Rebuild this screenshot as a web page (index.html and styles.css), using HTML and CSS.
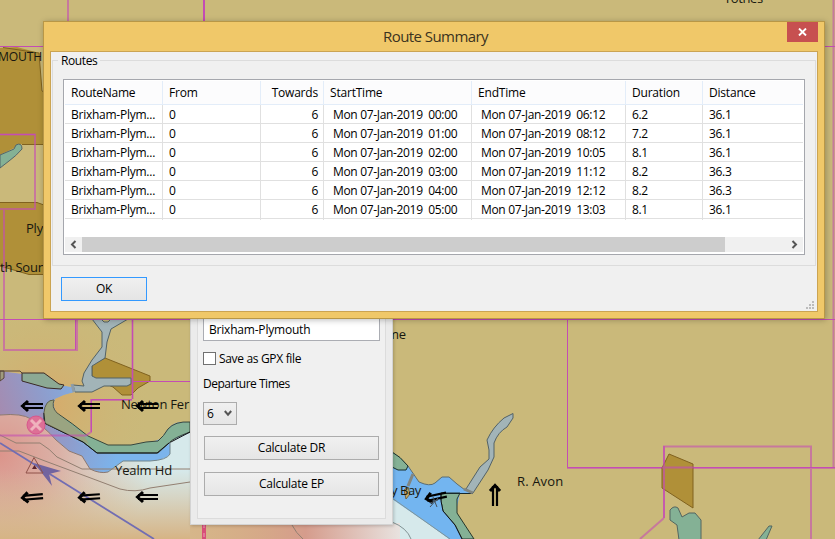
FILE: index.html
```html
<!DOCTYPE html>
<html lang="en">
<head>
<meta charset="utf-8">
<title>Route Summary</title>
<link rel="stylesheet" href="styles.css">
</head>
<body>
<div class="desktop">
<svg class="chart" width="835" height="539" viewBox="0 0 835 539">
  <defs>
    <radialGradient id="glow" gradientUnits="userSpaceOnUse" cx="0" cy="455" r="150">
      <stop offset="0" stop-color="#dc9086" stop-opacity=".95"/><stop offset=".4" stop-color="#dc9f90" stop-opacity=".75"/><stop offset="1" stop-color="#e0b48c" stop-opacity="0"/>
    </radialGradient>
    <linearGradient id="sand" x1="0" x2="0" y1="0" y2="1"><stop offset="0" stop-color="#d7b78b" stop-opacity="0"/><stop offset="1" stop-color="#d6b485"/></linearGradient>
    <linearGradient id="red" x1="0" x2="1" y1="0" y2="0"><stop offset="0" stop-color="#d5a880" stop-opacity="0"/><stop offset=".55" stop-color="#d59c8c"/><stop offset="1" stop-color="#e8e2df"/></linearGradient>
    <linearGradient id="shoal" gradientUnits="userSpaceOnUse" x1="0" y1="415" x2="85" y2="385"><stop offset="0" stop-color="#a58bb0"/><stop offset=".5" stop-color="#8f9ccb"/><stop offset="1" stop-color="#7fb1e6"/></linearGradient>
    <linearGradient id="channel" gradientUnits="userSpaceOnUse" x1="20" y1="420" x2="120" y2="450"><stop offset="0" stop-color="#a58bb0"/><stop offset=".5" stop-color="#8f9ccb"/><stop offset="1" stop-color="#7bb4ec"/></linearGradient>
    <radialGradient id="warm" gradientUnits="userSpaceOnUse" cx="45" cy="405" r="110"><stop offset="0" stop-color="#dda362" stop-opacity=".7"/><stop offset="1" stop-color="#cbb97b" stop-opacity="0"/></radialGradient>
    <g id="arrow" fill="none" stroke="#000"><path d="M6 2H26M6 -2H26" stroke-width="2.2"/><path d="M11 -5L5.500 0L11 5" stroke-width="3"/></g>
  </defs>
  <rect width="835" height="539" fill="#cab97a"/>
  <path d="M0 371L23 373L58 385L74 387L75 392H190V432L170 454L100 475L0 430Z" fill="url(#shoal)"/>
  <path d="M43 412V423L97 453H156L171 443V454Q169 461 150 461H123Q114 469 108 472Q96 474 88 468L69 452L30 420Z" fill="url(#channel)"/>
  <path id="land" d="M0 320H192V422H180Q170 423 163 436Q158 442 146 442L131 445H107L88 436Q70 422 57 413Q52 406 55 399Q65 394 75 392L74 387L58 385Q48 374 23 374L0 371Z" fill="#cab97a"/>
  <path d="M0 320H192V422H180Q170 423 163 436Q158 442 146 442L131 445H107L88 436Q70 422 57 413Q52 406 55 399Q65 394 75 392L74 387L58 385Q48 374 23 374L0 371Z" fill="url(#warm)"/>
  <path d="M0 415Q22 413 31 419Q44 426 56 440L69 451L82 456L90 469Q100 474 108 472L123 461H150Q165 460 170 454V441L192 432V539H0Z" fill="#d6e9eb"/>
  <path d="M0 415Q22 413 31 419Q44 426 56 440L69 451L82 456L90 469Q100 474 108 472L123 461H150Q165 460 170 454V441L192 432V539H0Z" fill="url(#glow)"/>
  <rect y="470" width="192" height="69" fill="url(#sand)"/>
  <rect x="190" y="523" width="203" height="16" fill="#d6b68a"/>
  <path d="M392 498L450 539H392Z" fill="#d6e9eb"/>
  <rect x="190" y="523" width="210" height="16" fill="url(#red)"/>
  <g stroke-width="1">
    <path d="M44 413Q45 400 54 400Q51 407 57 413Q72 423 88 436L108 445H131L146 442L158 441Q164 436 168 429Q175 421 190 422V432Q173 438 169 443L158 453H97L83 442L45 423Z" fill="#84b195" stroke="#39463b"/>
    <path d="M44 413V423L83 442L97 453H157L169 443L190 432" fill="none" stroke="#151515"/>
    <path d="M44 413Q45 400 54 400Q51 407 57 413L83 434L89 444L46 424Z" fill="#b0976d" opacity=".5"/>
    <path d="M22 373H44L59 384L64 385L61 389L47 388L22 381Z" fill="#8ca994" stroke="#3a2925"/>
    <path d="M0 371H4V378L0 381Z" fill="#a09b7e" stroke="#57453a"/>
    <path d="M0 371H20L22 373" fill="none" stroke="#57453a"/>
    <path d="M92 365L105 358L150 376V381L138 388L131 395H122L113 387L92 378Z" fill="#b09038" stroke="#80621f"/>
    <path d="M92 319L102 332V347L92 360L84 373L82 381L84 386L73 385L75 392H92L104 386H127L131 384V378H96L92 376V366L105 358L107 342L111 329L128 319H111L108 322L104 322L101 319Z" fill="#a2b4b8" stroke="#536266"/>
    <path d="M72 384L74 392" stroke="#8f9da6" stroke-width="3"/>
    <path d="M0 415Q22 413 31 419Q44 426 56 440L69 451L82 456L90 469Q100 474 108 472" fill="none" stroke="#8b7770"/>
    <path d="M108 472L123 461H150Q167 460 170 454V442" fill="none" stroke="#73858b"/>
    <g fill="none" stroke="#927f71"><path d="M0 435L16 443H40Q50 449 57 457L82 469H190"/><path d="M0 451H19L45 461L88 477L120 489Q135 493 150 488L190 482"/></g>
  </g>
  <path d="M0 48L17 47L39 53L42 91L44 92V144H22L0 155Z" fill="#b09038"/>
  <path d="M3 47.500L39 53L42 91L44 92M44 144.500H22" fill="none" stroke="#80621f"/>
  <path d="M0 155L14 149L16 145Q22 142 22 149Q16 156 9 161L0 168Z" fill="#84b195" stroke="#53666a"/>
  <path d="M0 202.500H37L44 205V274.500H29L0 266Z" fill="#b09038"/>
  <path d="M0 202.500H37L44 205M44 274.500H29L0 266" fill="none" stroke="#80621f"/>
  <g fill="none" stroke="#c44cb4">
    <path d="M68 0V22M0 134.500H35V209H0M4 209V350H77V319M132.500 319V399M0 435.500H86L91 432V400H132" stroke-width="2" opacity=".6"/>
    <path d="M204 0V22" stroke-width="2"/><path d="M0 46.500H44M824 46.500H835M0 319.500H835M132 381.500H190M567.500 319V467.500H835M132.500 319V399M0 134.500H35M91.500 432V399.500H132M75.500 319V350"/>
    <path d="M833.500 0V467M567 468H835M664 518V446.500H811V539M664 518L640 539" stroke-width="2" opacity=".6"/>
  </g>
  <path d="M204 524V539" stroke="#d84e79" stroke-width="4"/><path d="M204 524V539" stroke="#eca0b6" stroke-dasharray="4 5"/>
  <path d="M292 525Q296 533 303 539" fill="none" stroke="#927f71"/>
  <path d="M392 452L408 466L419 482Q430 487 435 483L442 477H449L457 484L465 490L473 493H460L450 539L392 499Z" fill="#73b5f0"/>
  <path d="M392 452L408 466L419 482Q430 487 435 483L442 477H449L457 484L465 490" fill="none" stroke="#5b6d72"/>
  <path d="M392 452Q400 456 408 466L406 470H398L392 467Z" fill="#84b195" stroke="#192e2b"/>
  <path d="M441 493H460L457 499V513L474 539H462L455 525L443 511L441 501Z" fill="#84b195" stroke="#26372c"/>
  <path d="M441 500L443 511L455 525L462 539H449L430 525V500Z" fill="#73b5f0"/>
  <path d="M441 493V501L443 511L455 525L462 539" fill="none" stroke="#111"/>
  <path d="M441 493.500H473" stroke="#17282a"/>
  <path d="M392 498L450 539" stroke="#809497"/><path d="M392 522Q407 528 411 539" fill="none" stroke="#819293"/>
  <path d="M513 413.500L504 418Q493 427 487 440L489 450V459L480 467L466 489L473 493L488 470L494 457V443Q498 432 507 427L513 418Z" fill="#a2b4b8" stroke="#536266"/>
  <path d="M464 489L473 493M413 474L408 486" stroke="#818681" stroke-width="3"/>
  <path d="M404 490L408 487L410 494L406 499Z" fill="#c4ad66" stroke="#77603b"/>
  <path d="M669 454L693 464V508L662 488V468Z" fill="#b09038" stroke="#80621f"/>
  <path d="M679 540L677 525L670 520V510Q674 505 678 508L682 517L689 513H695L701 520V540M758 540L769 526H772L766 540" fill="#84b195" stroke="#536560"/>
  <path d="M664 446V518M662 467.500H694" stroke="#c44cb4" stroke-width="2" opacity=".65"/>
  <circle cx="36" cy="425" r="9" fill="#dd6f96" stroke="#d8568c"/><path d="M31 420L41 430M41 420L31 430" stroke="#efb2bd" stroke-width="3"/>
  <path d="M0 443L154 539" stroke="#716db3" stroke-width="1.800"/><path d="M34 463L61 471L49 474L52 486Z" fill="#72649f"/>
  <path d="M34 457.500L43 473H26Z" fill="none" stroke="#8e5149"/><path d="M34.500 465L37 469H32Z" fill="#5b252d"/>
  <g class="place">
    <text x="42" y="61" text-anchor="end" textLength="44" lengthAdjust="spacingAndGlyphs">MOUTH</text>
    <text x="26" y="233">Ply</text><text x="0" y="272">th Soun</text><text x="121" y="409" textLength="68">Newton Fer</text>
    <text x="115" y="475" textLength="57">Yealm Hd</text><text x="387" y="339">me</text><text x="391" y="495" textLength="30">y Bay</text>
    <text x="517" y="486" textLength="46">R. Avon</text><text x="724" y="3" textLength="39">Totnes</text>
  </g>
  <use href="#arrow" x="17" y="406"/><use href="#arrow" x="74" y="406"/><use href="#arrow" x="132" y="406"/>
  <use href="#arrow" x="17" y="497" transform="rotate(-5 32 497)"/><use href="#arrow" x="74" y="497" transform="rotate(-4 89 497)"/><use href="#arrow" x="132" y="497"/>
  <use href="#arrow" transform="translate(421 500) rotate(-12)"/><use href="#arrow" transform="translate(495 480) rotate(90)"/>
  <path d="M430 503L438 500M433 497L437 507M438 498L430 507" stroke="#46515a"/>
</svg>

<section class="panel">
  <div class="panel-body">
    <input class="name" value="Brixham-Plymouth" aria-label="Route name">
    <label class="save"><i class="box"></i><span>Save as GPX file</span></label>
    <div class="caption">Departure Times</div>
    <div class="select"><span>6</span><svg width="8" height="7" viewBox="0 0 8 7"><path d="M.800 1L4 4.700L7.200 1" fill="none" stroke="#555" stroke-width="2"/></svg></div>
    <button class="button calc">Calculate DR</button>
    <button class="button calc">Calculate EP</button>
  </div>
</section>

<section class="dialog">
  <header class="titlebar"><h1>Route Summary</h1><button class="close" aria-label="Close"><svg width="9" height="8" viewBox="0 0 9 8"><path d="M1 .500L8 7.500M8 .500L1 7.500" stroke="#fff" stroke-width="1.900"/></svg></button></header>
  <div class="client">
    <fieldset class="group"><legend>Routes</legend>
      <div class="list">
        <div class="row head"><span>RouteName</span><span>From</span><span class="num">Towards</span><span>StartTime</span><span>EndTime</span><span>Duration</span><span>Distance</span></div>
        <div class="row"><span>Brixham-Plym...</span><span>0</span><span class="num">6</span><span class="time">Mon 07-Jan-2019&nbsp; 00:00</span><span class="time">Mon 07-Jan-2019&nbsp; 06:12</span><span>6.2</span><span>36.1</span></div>
        <div class="row"><span>Brixham-Plym...</span><span>0</span><span class="num">6</span><span class="time">Mon 07-Jan-2019&nbsp; 01:00</span><span class="time">Mon 07-Jan-2019&nbsp; 08:12</span><span>7.2</span><span>36.1</span></div>
        <div class="row"><span>Brixham-Plym...</span><span>0</span><span class="num">6</span><span class="time">Mon 07-Jan-2019&nbsp; 02:00</span><span class="time">Mon 07-Jan-2019&nbsp; 10:05</span><span>8.1</span><span>36.1</span></div>
        <div class="row"><span>Brixham-Plym...</span><span>0</span><span class="num">6</span><span class="time">Mon 07-Jan-2019&nbsp; 03:00</span><span class="time">Mon 07-Jan-2019&nbsp; 11:12</span><span>8.2</span><span>36.3</span></div>
        <div class="row"><span>Brixham-Plym...</span><span>0</span><span class="num">6</span><span class="time">Mon 07-Jan-2019&nbsp; 04:00</span><span class="time">Mon 07-Jan-2019&nbsp; 12:12</span><span>8.2</span><span>36.3</span></div>
        <div class="row"><span>Brixham-Plym...</span><span>0</span><span class="num">6</span><span class="time">Mon 07-Jan-2019&nbsp; 05:00</span><span class="time">Mon 07-Jan-2019&nbsp; 13:03</span><span>8.1</span><span>36.1</span></div>
        <div class="scroll"><svg width="17" height="15" viewBox="0 0 17 15"><path d="M10.500 4L7 7.500L10.500 11" fill="none" stroke="#555" stroke-width="2"/></svg><i class="thumb"></i><svg width="17" height="15" viewBox="0 0 17 15"><path d="M6.500 4L10 7.500L6.500 11" fill="none" stroke="#555" stroke-width="2"/></svg></div>
      </div>
    </fieldset>
    <footer class="actions"><button class="button ok">OK</button>
      <svg class="grip" width="8" height="8" viewBox="0 0 8 8" fill="#bcbcbc"><path d="M6 0h2v2H6zM3 3h2v2H3zM6 3h2v2H6zM0 6h2v2H0zM3 6h2v2H3zM6 6h2v2H6z"/></svg>
    </footer>
  </div>
</section>
</div>
</body>
</html>
```
FILE: styles.css
```css
* { box-sizing: border-box; }
body { margin: 0; font: 12px/16px "Open Sans", "Noto Sans", sans-serif; letter-spacing: -.33px; color: #000; overflow: hidden; }
button, input { font: inherit; letter-spacing: inherit; color: inherit; margin: 0; padding: 0; }
.desktop { position: relative; width: 835px; height: 539px; overflow: hidden; }
.chart { display: block; }
.place { font: 13px "Open Sans", "Noto Sans", sans-serif; letter-spacing: -.2px; fill: #17170f; }

.panel { position: absolute; left: 190px; top: 300px; width: 203px; height: 225px; padding: 0 6px 6px; background: #ebebeb; border: 1px solid #d3d3d3; box-shadow: 1px 1px 3px #0003; }
.panel-body { height: 218px; padding: 15px 5px 0; background: #f0f0f0; border: 1px solid #dcdcdc; display: flex; flex-direction: column; align-items: flex-start; }
.name { width: 177px; height: 24px; padding: 0 5px; background: #fff; border: 1px solid #abadb3; letter-spacing: -.2px; }
.save { display: flex; align-items: center; gap: 3px; height: 13px; margin-top: 11px; }
.box { width: 13px; height: 13px; border: 1px solid #707070; background: #fff; }
.caption { margin-top: 11px; letter-spacing: -.48px; }
.select { display: flex; align-items: center; justify-content: space-between; width: 34px; height: 23px; margin-top: 10px; padding: 0 4px 0 3px; border: 1px solid #acacac; background: linear-gradient(#f0f0f0, #e6e6e6); }
.button { border: 1px solid #acacac; background: linear-gradient(#f0f0f0, #e5e5e5); text-align: center; }
.calc { width: 175px; height: 24px; margin: 11px 0 0 1px; letter-spacing: -.25px; }
.calc + .calc { margin-top: 12px; }

.dialog { position: absolute; left: 43px; top: 21px; width: 782px; height: 298px; padding: 0 6px 6px; background: #f0c869; border: 1px solid #b89747; box-shadow: 1px 1px 6px #0004; }
.titlebar { display: flex; align-items: flex-start; justify-content: center; height: 29px; position: relative; }
.titlebar h1 { margin: 5px 0 0 3px; font-size: 15px; line-height: 18px; font-weight: 400; letter-spacing: -.56px; color: #3b3320; }
.close { position: absolute; right: 0; top: 0; width: 31px; height: 20px; display: flex; align-items: center; justify-content: center; background: #c75050; border: 0; }
.client { height: 261px; border: 1px solid #cba452; background: #f0f0f0; padding: 0 1px; }
.group { position: relative; height: 214px; margin: 0; padding: 11px 10px 0; border: 1px solid #dcdcdc; min-width: 0; }
.group legend { height: 16px; padding: 0 3px; margin: 0 0 0 -5px; line-height: 18px; letter-spacing: -.38px; }
.list { height: 176px; width: 742px; padding: 1px; background: #fff; border: 1px solid #a5a7ad; }
.row { display: grid; grid-template-columns: 98px 98px 63px 148px 154px 77px 100px; height: 19px; border-bottom: 1px solid #e0e0e0; line-height: 20px; }
.row span { height: 100%; border-right: 1px solid #e0e0e0; padding-left: 6px; white-space: nowrap; }
.row span:first-child { letter-spacing: -.25px; }
.row span:last-child { border-right: 0; }
.row .num { text-align: right; padding: 0 5px 0 0; }
.row .time { padding-left: 9px; }
.head { height: 24px; line-height: 24px; background: #fcfcfd; border-color: #e3edf9; letter-spacing: -.2px; }
.head span { border-color: #e3edf9; }
.scroll { display: flex; height: 15px; margin-top: 18px; background: #f0f0f0; justify-content: space-between; }
.thumb { width: 643px; margin-right: 61px; background: #cdcdcd; }
.actions { display: flex; justify-content: space-between; align-items: flex-end; padding: 11px 2px 0 9px; height: 43px; }
.ok { width: 86px; height: 24px; border-color: #3399ff; align-self: flex-start; }
```
